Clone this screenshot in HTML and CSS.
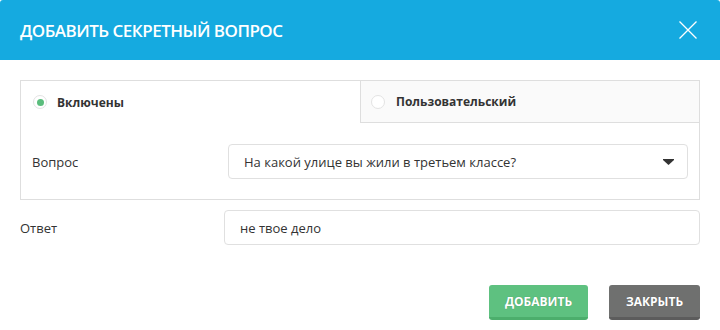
FILE: index.html
```html
<!DOCTYPE html>
<html lang="ru">
<head>
<meta charset="utf-8">
<link rel="stylesheet" href="styles.css">
</head>
<body>
<div class="modal">
  <div class="modal-header">
    <h1 class="modal-title">ДОБАВИТЬ СЕКРЕТНЫЙ ВОПРОС</h1>
    <svg class="close" width="18" height="18" viewBox="0 0 18 18"><path d="M0.5 0.5 L17.5 17.5 M17.5 0.5 L0.5 17.5" stroke="#fff" stroke-width="1.3" fill="none"/></svg>
  </div>
  <div class="modal-body">
    <div class="tabs">
      <div class="tab-head">
        <div class="tab active"><span class="radio checked"></span><span class="tab-label">Включены</span></div>
        <div class="tab"><span class="radio"></span><span class="tab-label">Пользовательский</span></div>
      </div>
      <div class="tab-content">
        <div class="field-label q">Вопрос</div>
        <div class="select">
          <span>На какой улице вы жили в третьем классе?</span>
          <svg class="caret" width="11" height="6" viewBox="0 0 11 6"><path d="M0 0 H11 V1 L5.5 6 L0 1 Z" fill="#333"/></svg>
        </div>
      </div>
    </div>
    <div class="answer-row">
      <div class="field-label">Ответ</div>
      <div class="input">не твое дело</div>
    </div>
    <div class="actions">
      <button class="btn btn-green">ДОБАВИТЬ</button>
      <button class="btn btn-gray">ЗАКРЫТЬ</button>
    </div>
  </div>
</div>
</body>
</html>
```
FILE: styles.css
```css
* { box-sizing: border-box; }
html, body { margin: 0; padding: 0; background: #fff; }
body { font-family: "Open Sans", "Noto Sans", sans-serif; color: #333; width: 720px; height: 330px; overflow: hidden; }
.modal { width: 720px; }
.modal-header {
  height: 60px;
  background: #15aae0;
  display: flex;
  align-items: center;
  justify-content: space-between;
  padding: 0 23px 0 20px;
  border-radius: 3px 3px 0 0;
}
.modal-title {
  margin: 0;
  font-size: 17px;
  font-weight: 600;
  color: #fff;
  letter-spacing: -0.5px;
}
.close { display: block; }
.modal-body { padding: 20px 20px 0 20px; }
.tabs { border: 1px solid #dedede; }
.tab-head { display: grid; grid-template-columns: 339px 1fr; height: 42px; }
.tab {
  display: flex;
  align-items: center;
  padding-left: 10px;
  background: #fafafa;
  border-bottom: 1px solid #dedede;
  border-left: 1px solid #dedede;
}
.tab.active { background: #fff; border: none; padding-left: 12px; }
.radio {
  width: 14px; height: 14px;
  border: 1px solid #e3e3e3;
  border-radius: 50%;
  background: #fff;
  display: flex; align-items: center; justify-content: center;
  margin-right: 11px;
}
.tab.active .radio { margin-right: 10px; }
.radio.checked::after {
  content: "";
  width: 7px; height: 7px; border-radius: 50%;
  background: #5bbd7d;
}
.tab-label { font-size: 12px; font-weight: 700; color: #333; }
.tab-content {
  display: grid;
  grid-template-columns: 196px 460px;
  align-items: center;
  padding: 21px 0 20px 11px;
}
.field-label { font-size: 13px; font-weight: 500; color: #333; }
.select, .input {
  height: 35px;
  border: 1px solid #e0e0e0;
  border-radius: 4px;
  font-size: 13px;
  color: #333;
  display: flex;
  align-items: center;
}
.select { padding: 0 13px 0 15px; justify-content: space-between; }
.answer-row {
  display: grid;
  grid-template-columns: 204px 476px;
  align-items: center;
  margin-top: 10px;
}
.input { padding: 0 15px; }
.actions {
  display: flex;
  justify-content: flex-end;
  gap: 21px;
  margin-top: 40px;
}
.btn {
  height: 35px;
  border: none;
  border-radius: 3px;
  font-family: "Open Sans", "Noto Sans", sans-serif;
  font-size: 12px;
  font-weight: 700;
  color: #fff;
  padding: 0 15px;
  text-shadow: 0 0 1px rgba(0,0,0,0.25);
}
.btn-green { background: #5ec180; border-bottom: 3px solid #4cae6c; width: 99px; }
.btn-gray { background: #6f706f; border-bottom: 3px solid #5c5c5c; width: 91px; }
```
